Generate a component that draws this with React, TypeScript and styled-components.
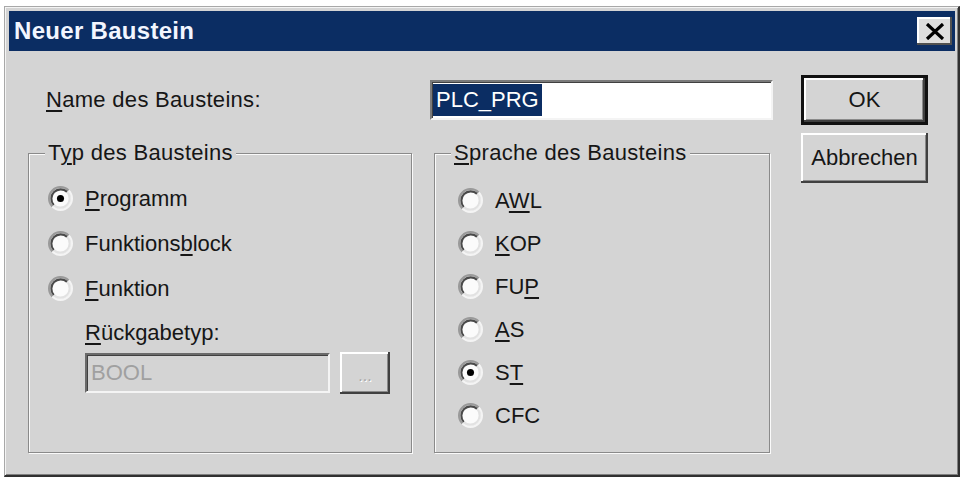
import React from "react";
import styled, { createGlobalStyle } from "styled-components";

const FACE = "#d4d4d4";
const FONT = `"Liberation Sans", Arial, sans-serif`;

const GlobalStyle = createGlobalStyle`
  body {
    margin: 0;
    background: #fff;
    font-family: ${FONT};
  }
`;

const typOptions = [
  { pre: "", key: "P", post: "rogramm", checked: true },
  { pre: "Funktions", key: "b", post: "lock", checked: false },
  { pre: "", key: "F", post: "unktion", checked: false },
];

const spracheOptions = [
  { pre: "A", key: "W", post: "L", checked: false },
  { pre: "", key: "K", post: "OP", checked: false },
  { pre: "FU", key: "P", post: "", checked: false },
  { pre: "", key: "A", post: "S", checked: false },
  { pre: "S", key: "T", post: "", checked: true },
  { pre: "CFC", key: "", post: "", checked: false },
];

type Option = { pre: string; key: string; post: string; checked: boolean };

const RadioMark: React.FC<{ checked: boolean }> = ({ checked }) => (
  <RadioSvg viewBox="0 0 12 12">
    <circle cx="6" cy="6" r="5" fill="#fbfbfb" />
    <path d="M2.11 9.89 A5.5 5.5 0 0 1 9.89 2.11" stroke="#9a9a9a" fill="none" />
    <path d="M2.82 9.18 A4.5 4.5 0 0 1 9.18 2.82" stroke="#4a4a4a" fill="none" />
    <path d="M9.89 2.11 A5.5 5.5 0 0 1 2.11 9.89" stroke="#f4f4f4" fill="none" />
    <path d="M9.18 2.82 A4.5 4.5 0 0 1 2.82 9.18" stroke="#e2e2e2" fill="none" />
    {checked && <circle cx="6" cy="6" r="1.7" fill="#000" />}
  </RadioSvg>
);

const RadioList: React.FC<{ items: Option[]; $row: number; $top: number; $left: number }> = ({
  items,
  $row,
  $top,
  $left,
}) => (
  <List $top={$top} $left={$left}>
    {items.map((item, index) => (
      <RadioRow key={index} $row={$row}>
        <RadioMark checked={item.checked} />
        <span>
          {item.pre}
          {item.key && <Key>{item.key}</Key>}
          {item.post}
        </span>
      </RadioRow>
    ))}
  </List>
);

export default function App() {
  return (
    <>
      <GlobalStyle />
      <Dialog>
        <TitleBar>
          <Title>Neuer Baustein</Title>
          <CloseButton>
            <svg width="20" height="17" viewBox="0 0 20 17">
              <path d="M2 1 L18 16 M18 1 L2 16" stroke="#000" strokeWidth="3.2" />
            </svg>
          </CloseButton>
        </TitleBar>
        <Body>
          <MainColumn>
            <NameRow>
              <NameLabel>
                <Key>N</Key>ame des Bausteins:
              </NameLabel>
              <TextField>
                <Selection>PLC_PRG</Selection>
              </TextField>
            </NameRow>
            <GroupRow>
              <Group $width={384}>
                <Legend>
                  T<Key>y</Key>p des Bausteins
                </Legend>
                <RadioList items={typOptions} $row={45} $top={10} $left={19} />
                <ReturnBlock>
                  <ReturnLabel>
                    <Key>R</Key>ückgabetyp:
                  </ReturnLabel>
                  <ReturnRow>
                    <DisabledField>BOOL</DisabledField>
                    <DotsButton>...</DotsButton>
                  </ReturnRow>
                </ReturnBlock>
              </Group>
              <Group $width={336}>
                <Legend>
                  <Key>S</Key>prache des Bausteins
                </Legend>
                <RadioList items={spracheOptions} $row={43} $top={13} $left={23} />
              </Group>
            </GroupRow>
          </MainColumn>
          <ButtonColumn>
            <PushButton $default>OK</PushButton>
            <PushButton>Abbrechen</PushButton>
          </ButtonColumn>
        </Body>
      </Dialog>
    </>
  );
}

const Dialog = styled.div`
  box-sizing: border-box;
  width: 956px;
  height: 471px;
  margin: 6px 0 0 4px;
  padding: 4px 3px 3px 4px;
  background: ${FACE};
  border: solid;
  border-width: 1px 2px 2px 1px;
  border-color: #a8a8a8 #303030 #303030 #a8a8a8;
  box-shadow: inset 1px 1px #f4f4f4, inset -1px -1px #808080;
  display: flex;
  flex-direction: column;
`;

const TitleBar = styled.div`
  height: 40px;
  flex: none;
  background: #0b2d63;
  display: flex;
  align-items: center;
  justify-content: space-between;
  padding-left: 5px;
`;

const Title = styled.div`
  color: #f2f6ff;
  font-weight: bold;
  font-size: 24px;
  letter-spacing: 0.3px;
`;

const CloseButton = styled.div`
  box-sizing: border-box;
  width: 35px;
  height: 28px;
  margin-right: 3px;
  background: #dedede;
  display: flex;
  align-items: center;
  justify-content: center;
  box-shadow: inset -2px -2px #505050, inset 2px 2px #fff;
`;

const Body = styled.div`
  flex: 1;
  display: flex;
  padding: 24px 0 0 19px;
  font-size: 22px;
  color: #161616;
`;

const MainColumn = styled.div`
  width: 745px;
  display: flex;
  flex-direction: column;
`;

const NameRow = styled.div`
  display: flex;
  align-items: center;
  height: 40px;
  margin-top: 5px;
`;

const NameLabel = styled.div`
  box-sizing: border-box;
  width: 402px;
  padding-left: 18px;
  letter-spacing: 0.3px;
`;

const TextField = styled.div`
  box-sizing: border-box;
  width: 343px;
  height: 40px;
  background: #fff;
  border: 2px solid;
  border-color: #7a7a7a #f4f4f4 #f4f4f4 #7a7a7a;
  box-shadow: inset 1px 1px #404040;
  padding: 2px 0 0 1px;
`;

const Selection = styled.span`
  display: inline-block;
  background: #0b2d63;
  color: #fff;
  line-height: 32px;
  padding: 0 3px 0 3px;
`;

const GroupRow = styled.div`
  display: flex;
  gap: 22px;
  margin-top: 20px;
`;

const Group = styled.fieldset<{ $width: number }>`
  box-sizing: border-box;
  width: ${(p) => p.$width}px;
  height: 313px;
  margin: 0;
  padding: 0;
  border: 1px solid #8a8a8a;
  box-shadow: inset 1px 1px #fafafa, 1px 1px #fafafa;
`;

const Legend = styled.legend`
  margin-left: 16px;
  padding: 0 3px;
  line-height: 26px;
  background: ${FACE};
  letter-spacing: 0.3px;
`;

const List = styled.div<{ $top: number; $left: number }>`
  padding: ${(p) => p.$top}px 0 0 ${(p) => p.$left}px;
`;

const RadioRow = styled.div<{ $row: number }>`
  display: flex;
  align-items: center;
  gap: 12px;
  height: ${(p) => p.$row}px;
`;

const RadioSvg = styled.svg`
  width: 25px;
  height: 25px;
  flex: none;
`;

const Key = styled.span`
  text-decoration: underline;
  text-decoration-thickness: 2px;
  text-underline-offset: 3px;
`;

const ReturnBlock = styled.div`
  padding-left: 56px;
  margin-top: 9px;
`;

const ReturnLabel = styled.div`
  line-height: 26px;
`;

const ReturnRow = styled.div`
  display: flex;
  align-items: center;
  gap: 10px;
  margin-top: 6px;
`;

const DisabledField = styled.div`
  box-sizing: border-box;
  width: 245px;
  height: 40px;
  background: ${FACE};
  border: 2px solid;
  border-color: #6a6a6a #f4f4f4 #f4f4f4 #6a6a6a;
  box-shadow: inset 1px 1px #404040;
  color: #a0a0a0;
  line-height: 36px;
  padding-left: 4px;
`;

const DotsButton = styled.div`
  box-sizing: border-box;
  width: 50px;
  height: 42px;
  background: ${FACE};
  box-shadow: inset -2px -2px #404040, inset 2px 2px #fff, inset -3px -3px #8a8a8a;
  color: #a8a8a8;
  text-shadow: 1px 1px #fff;
  font-size: 16px;
  display: flex;
  align-items: center;
  justify-content: center;
  padding-top: 6px;
`;

const ButtonColumn = styled.div`
  display: flex;
  flex-direction: column;
  gap: 8px;
  margin-left: 28px;
`;

const PushButton = styled.button<{ $default?: boolean }>`
  box-sizing: border-box;
  width: 127px;
  height: 50px;
  padding: 0;
  background: ${FACE};
  font-family: ${FONT};
  font-size: 22px;
  color: #161616;
  border: ${(p) => (p.$default ? "3px solid #111" : "none")};
  box-shadow: inset -2px -2px #404040, inset 2px 2px #fff, inset -3px -3px #8a8a8a;
`;
